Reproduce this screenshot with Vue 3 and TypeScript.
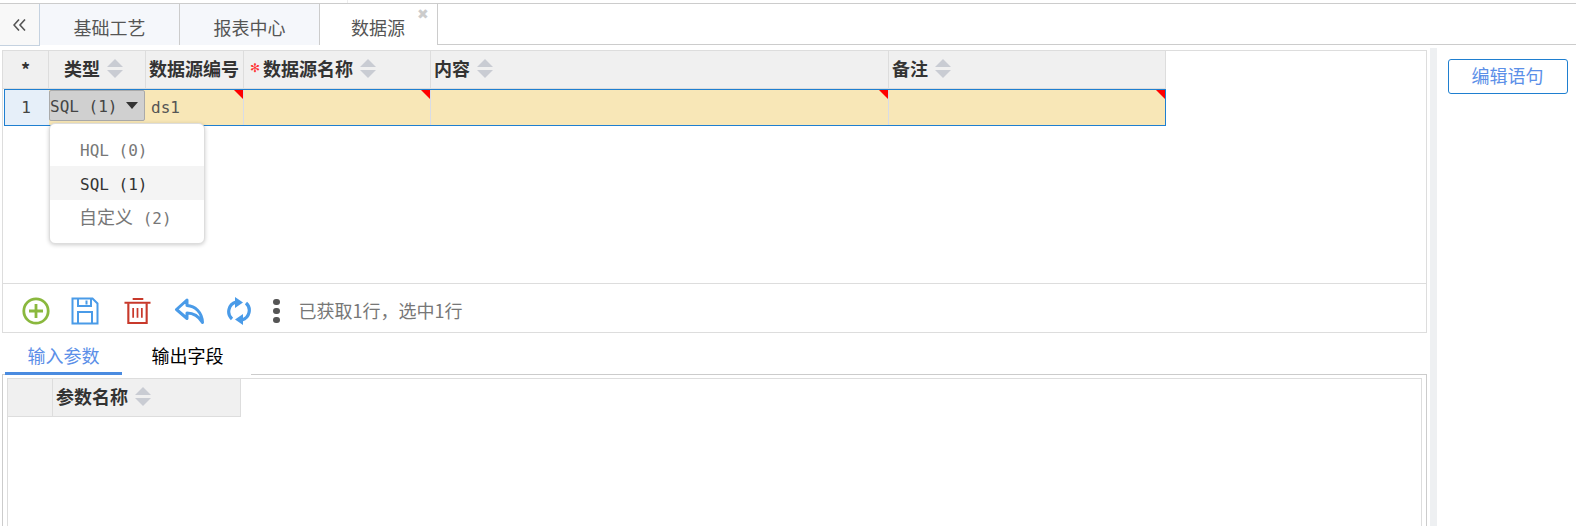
<script setup lang="ts">
import { ref } from 'vue'

const tabs = ref([
  { id: 1, name: '基础工艺', width: 140, active: false },
  { id: 2, name: '报表中心', width: 140, active: false },
  { id: 3, name: '数据源', width: 118, active: true },
])

// 主表列
const columns = [
  { name: 'type', label: '类型', width: 97, sort: true, pad: 15 },
  { name: 'code', label: '数据源编号', width: 98, sort: false, pad: 3 },
  { name: 'title', label: '数据源名称', width: 187, sort: true, pad: 3, required: true },
  { name: 'content', label: '内容', width: 458, sort: true, pad: 3 },
  { name: 'remark', label: '备注', width: 277, sort: true, pad: 3 },
]

const options = [
  { label: 'HQL (0)', hover: false },
  { label: 'SQL (1)', hover: true },
]
</script>

<template>
  <div class="page">
    <div class="topstrip"></div>
    <div class="tabbar">
      <div class="collapse">
        <svg viewBox="0 0 13 12" width="13" height="12">
          <path d="M6 .5 1 6l5 5.500M12 .5 7 6l5 5.500" fill="none" stroke="#555" stroke-width="1.600" />
        </svg>
      </div>
      <div
        v-for="tab in tabs"
        :key="tab.id"
        class="tab"
        :class="{ active: tab.active }"
        :style="{ width: tab.width + 'px' }"
      >
        {{ tab.name }}
        <span v-if="tab.active" class="close">✖</span>
      </div>
    </div>

    <div class="body">
      <div class="left">
        <div class="panel">
          <div class="grid">
            <div class="head">
              <div class="cell-no star">*</div>
              <div
                v-for="col in columns"
                :key="col.name"
                class="th"
                :style="{ width: col.width + 'px', paddingLeft: col.pad + 'px' }"
              >
                <span v-if="col.required" class="req">✻</span>{{ col.label }}
                <span v-if="col.sort" class="sort"><i class="up"></i><i class="down"></i></span>
              </div>
            </div>
            <div class="row">
              <div class="cell-no num">1</div>
              <div class="td td-select" style="width: 97px">
                <div class="select">SQL (1)<i class="caret"></i></div>
                <div class="dropdown">
                  <div v-for="opt in options" :key="opt.label" class="opt" :class="{ hover: opt.hover }">{{ opt.label }}</div>
                  <div class="opt"><span class="cjk">自定义</span> (2)</div>
                </div>
              </div>
              <div class="td mark" style="width: 98px">ds1</div>
              <div class="td mark" style="width: 187px"></div>
              <div class="td mark" style="width: 458px"></div>
              <div class="td mark" style="width: 276px"></div>
            </div>
          </div>
          <div class="toolbar">
            <svg class="ic add" viewBox="0 0 28 28">
              <circle cx="14" cy="14" r="12.200" fill="none" stroke="#8ab83e" stroke-width="2.800" />
              <path d="M14 7v14M7 14h14" stroke="#8ab83e" stroke-width="2.800" fill="none" />
            </svg>
            <svg class="ic save" viewBox="0 0 28 28">
              <path d="M1.500 1.500h20l5 5v20h-25z" fill="none" stroke="#4a9be8" stroke-width="2" />
              <path d="M7 2v7h13V2M15.500 3.500v4M7 26v-11h14v11" fill="none" stroke="#4a9be8" stroke-width="2" />
            </svg>
            <svg class="ic trash" viewBox="0 0 28 28">
              <path d="M9 1.500h11M.5 5.500h27" stroke="#c8392b" stroke-width="2.200" fill="none" />
              <path d="M4.500 6v20.500h19V6" stroke="#c8392b" stroke-width="2.200" fill="none" />
              <path d="M9.500 11v10M14 11v10M18.500 11v10" stroke="#c8392b" stroke-width="1.800" fill="none" />
            </svg>
            <svg class="ic reply" viewBox="0 0 30 26">
              <path d="M13 2 2.500 11.500 13 20.500v-5.500c6 0 11 2 15.500 9.500C28 14 21 8 13 7.500z" fill="none" stroke="#4a9be8" stroke-width="3" stroke-linejoin="round" />
            </svg>
            <svg class="ic refresh" viewBox="0 0 24 28">
              <path d="M5 22A10 10 0 0 1 9 5M19 6a10 10 0 0 1-4 17" fill="none" stroke="#4a9be8" stroke-width="3.200" />
              <path d="M8 0l8 5.500-8 5.500zM16 17l-8 5.500 8 5.500z" fill="#4a9be8" />
            </svg>
            <div class="dots"><i></i><i></i><i></i></div>
            <span class="status">已获取1行，选中1行</span>
          </div>
        </div>

        <div class="subtabs">
          <div class="subtab on">输入参数</div>
          <div class="subtab off">输出字段</div>
        </div>
        <div class="subpanel">
          <div class="inner">
            <div class="inner-head">
              <div class="inner-no"></div>
              <div class="inner-th">参数名称<span class="sort"><i class="up"></i><i class="down"></i></span></div>
            </div>
          </div>
        </div>
      </div>

      <div class="gutter"></div>

      <div class="right">
        <button class="edit-btn">编辑语句</button>
      </div>
    </div>
  </div>
</template>

<style>
html,
body {
  margin: 0;
  background: #fff;
  overflow: hidden;
}
</style>

<style scoped>
.page {
  width: 1576px;
  height: 526px;
  overflow: hidden;
  font-family: "Noto Sans CJK SC", "Liberation Sans", sans-serif;
  font-size: 18px;
  color: #333;
}
.topstrip {
  width: 347px;
  height: 3px;
  border-right: 1px solid #eee;
}
.tabbar {
  display: flex;
  height: 40px;
  border-top: 1px solid #ccc;
  border-bottom: 1px solid #ccc;
}
.collapse {
  width: 40px;
  height: 42px;
  flex: none;
  box-sizing: border-box;
  background: #f8f8f8;
  border-right: 1px solid #c5d2e0;
  border-bottom: 1px solid #c5d2e0;
  display: flex;
  justify-content: center;
  padding-top: 15px;
  position: relative;
  z-index: 1;
}
.collapse svg {
  display: block;
}
.tab {
  height: 41px;
  flex: none;
  box-sizing: border-box;
  background: #f5f7fb;
  border-right: 1px solid #ccc;
  text-align: center;
  line-height: 46px;
  color: #555;
  position: relative;
}
.tab.active {
  padding-right: 1px;
  background: #fff;
  z-index: 1;
}
.close {
  position: absolute;
  right: 8px;
  top: 0;
  font-size: 14px;
  line-height: 18px;
  color: #ccc;
}
.body {
  display: flex;
  height: 481px;
}
.left {
  width: 1430px;
  flex: none;
  padding: 5px 0 0 2px;
  box-sizing: border-box;
}
.panel {
  width: 1425px;
  height: 283px;
  box-sizing: border-box;
  border: 1px solid #ddd;
  display: flex;
  flex-direction: column;
}
.grid {
  height: 232px;
  flex: none;
  border-bottom: 1px solid #ddd;
}
.head {
  display: flex;
  height: 38px;
  width: 1163px;
  box-sizing: border-box;
  background: #f0f0f0;
  border-bottom: 1px solid #ddd;
}
.cell-no {
  width: 46px;
  flex: none;
  text-align: center;
  box-sizing: border-box;
}
.star {
  border-right: 1px solid #ddd;
  line-height: 37px;
  font-weight: 700;
}
.th {
  flex: none;
  box-sizing: border-box;
  padding-bottom: 3px;
  border-right: 1px solid #ddd;
  font-weight: 700;
  white-space: nowrap;
  display: flex;
  align-items: center;
}
.req {
  color: #f33;
  font-size: 12px;
  font-weight: 400;
  margin: 0 3px 0 3px;
  font-family: "DejaVu Sans", sans-serif;
}
.sort {
  display: inline-flex;
  flex-direction: column;
  gap: 3px;
  margin-left: 7px;
}
.sort i {
  display: block;
  width: 0;
  height: 0;
  border-left: 8px solid transparent;
  border-right: 8px solid transparent;
}
.sort .up {
  border-bottom: 8px solid #c9ccd3;
}
.sort .down {
  border-top: 8px solid #c9ccd3;
}
.row {
  display: flex;
  height: 35px;
  width: 1160px;
  margin-left: 1px;
  border: 1px solid #1f7fd0;
}
.num {
  width: 44px;
  padding-right: 2px;
  background: #e6eff9;
  font-family: "DejaVu Sans Mono", monospace;
  font-size: 16px;
  line-height: 36px;
  color: #444;
}
.td {
  flex: none;
  box-sizing: border-box;
  background: #f8e7b7;
  font-family: "DejaVu Sans Mono", monospace;
  font-size: 16px;
  line-height: 36px;
  padding-left: 5px;
  color: #555;
  position: relative;
  border-right: 1px solid #d8dce6;
}
.td:last-child {
  border-right: 0;
}
.td-select {
  padding: 0 1px 0 0;
  border-right: 0;
}
.mark::after {
  content: "";
  position: absolute;
  top: 0;
  right: 0;
  border-top: 9px solid #f00;
  border-left: 9px solid transparent;
}
.select {
  height: 31px;
  box-sizing: border-box;
  padding-top: 3px;
  background: #d0d0d0;
  border: 1px solid #aaa;
  border-radius: 2px;
  color: #444;
  display: flex;
  align-items: center;
}
.caret {
  margin: -3px 0 0 9px;
  border-top: 7px solid #333;
  border-left: 6px solid transparent;
  border-right: 6px solid transparent;
}
.dropdown {
  position: absolute;
  left: 0;
  top: 33px;
  z-index: 5;
  width: 156px;
  height: 121px;
  box-sizing: border-box;
  padding-top: 8px;
  background: #fff;
  border: 1px solid #ddd;
  border-radius: 6px;
  box-shadow: 0 1px 4px rgba(0, 0, 0, 0.2);
}
.opt {
  height: 34px;
  line-height: 38px;
  padding-left: 30px;
  color: #777;
  white-space: nowrap;
}
.opt.hover {
  background: #f4f4f4;
  color: #333;
}
.cjk {
  font-family: "Noto Sans CJK SC", sans-serif;
  font-size: 18px;
  line-height: 1;
  margin-left: -1px;
}
.toolbar {
  flex: 1;
  display: flex;
  align-items: center;
  padding: 6px 0 0 19px;
}
.ic {
  flex: none;
  display: block;
}
.add {
  width: 28px;
  height: 28px;
  margin-right: 21px;
}
.save {
  width: 28px;
  height: 28px;
  margin-right: 25px;
}
.trash {
  width: 27px;
  height: 28px;
  margin-right: 23px;
}
.reply {
  width: 30px;
  height: 26px;
  margin-right: 23px;
}
.refresh {
  width: 24px;
  height: 28px;
  margin-right: 22px;
}
.dots {
  display: flex;
  flex-direction: column;
  gap: 2.500px;
  margin-right: 19px;
}
.dots i {
  display: block;
  width: 6.500px;
  height: 6.500px;
  border-radius: 50%;
  background: #555;
}
.status {
  color: #777;
  margin-top: -2px;
}
.subtabs {
  display: flex;
  height: 42px;
  padding-left: 3px;
  box-sizing: border-box;
  position: relative;
  z-index: 1;
}
.subtab {
  height: 42px;
  box-sizing: border-box;
  text-align: center;
  line-height: 44px;
  color: #000;
}
.subtab.on {
  width: 117px;
  color: #5b8fe8;
  border-bottom: 3px solid #4a8be0;
}
.subtab.off {
  width: 129px;
  padding-left: 2px;
  background: #fff;
}
.subpanel {
  width: 1425px;
  height: 200px;
  box-sizing: border-box;
  border: 1px solid #ccc;
  border-bottom: 0;
  margin-top: -1px;
  padding: 3px 4px 0;
  background: #fff;
}
.inner {
  height: 200px;
  box-sizing: border-box;
  border: 1px solid #ddd;
}
.inner-head {
  display: flex;
  width: 233px;
  height: 38px;
  box-sizing: border-box;
  background: #f0f0f0;
  border-bottom: 1px solid #ddd;
  border-right: 1px solid #ddd;
}
.inner-no {
  width: 44px;
  flex: none;
  border-right: 1px solid #ddd;
}
.inner-th {
  padding: 0 0 3px 3px;
  font-weight: 700;
  display: flex;
  align-items: center;
}
.gutter {
  width: 7px;
  flex: none;
  background: #eef0f2;
  margin-top: 3px;
}
.right {
  flex: 1;
  padding: 14px 8px 0 11px;
}
.edit-btn {
  display: block;
  width: 120px;
  height: 35px;
  padding: 0 1px 3px 0;
  box-sizing: border-box;
  background: #fff;
  border: 1px solid #1f7fd0;
  border-radius: 3px;
  font: inherit;
  color: #5b8fe8;
}
</style>
